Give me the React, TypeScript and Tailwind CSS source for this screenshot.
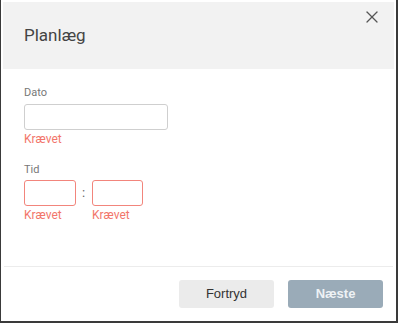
import { X } from 'lucide-react';

function Field({ w, error }: { w: string; error?: boolean }) {
  return (
    <div className="flex flex-col">
      <div
        className={`${w} h-[26px] rounded-[3px] border bg-white ${
          error ? 'border-[#f2857c]' : 'border-[#cfcfcf]'
        }`}
      />
      <span className="mt-[2px] text-[12px] leading-[14px] text-[#f2766b]">Krævet</span>
    </div>
  );
}

export default function App() {
  return (
    <div
      className="w-[398px] h-[323px] bg-white border-l border-r-2 border-b-2 border-[#3a3a3a] pt-[2px] pl-[2px] pr-[2px] flex flex-col"
      style={{ fontFamily: 'Roboto, "Liberation Sans", sans-serif' }}
    >
      {/* Header */}
      <div className="relative h-[67px] bg-[#f2f2f2] flex items-center pl-[21px]">
        <h1 className="text-[17px] text-[#444] font-normal">Planlæg</h1>
        <button className="absolute right-[12px] top-[5px] text-[#555]">
          <X className="w-[20px] h-[20px]" strokeWidth={1.5} />
        </button>
      </div>

      {/* Body */}
      <div className="flex-1 px-[21px] pt-[17px]">
        <div className="text-[11px] leading-[14px] text-[#777]">Dato</div>
        <div className="mt-[4px]">
          <Field w="w-[144px]" />
        </div>
        <div className="mt-[17px] text-[11px] leading-[14px] text-[#777]">Tid</div>
        <div className="mt-[3px] flex items-start gap-[6px]">
          <Field w="w-[52px]" error />
          <span className="w-[4px] h-[26px] flex items-center text-[13px] text-[#666]">:</span>
          <Field w="w-[51px]" error />
        </div>
      </div>

      {/* Footer */}
      <div className="h-px mx-[1px] bg-[#ececec]" />
      <div
        className="h-[54px] flex items-center justify-end gap-[14px] pr-[11px]"
        style={{ fontFamily: '"Liberation Sans", Arial, sans-serif' }}
      >
        <button className="w-[95px] h-[28px] rounded-[3px] bg-[#ebebeb] text-[13px] text-[#333]">
          Fortryd
        </button>
        <button className="w-[95px] h-[28px] rounded-[3px] bg-[#9aabb8] text-[13px] text-[#eef2f5] font-bold">
          Næste
        </button>
      </div>
    </div>
  );
}
